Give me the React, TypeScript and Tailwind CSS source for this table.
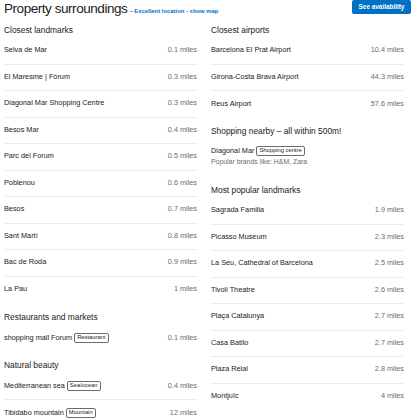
import React from "react";

interface Place {
	name: string;
	distance: string;
	tag?: string;
}

interface Section {
	title: string;
	places: Place[];
}

const leftSections: Section[] = [
	{
		title: "Closest landmarks",
		places: [
			{ name: "Selva de Mar", distance: "0.1 miles" },
			{ name: "El Maresme | Fòrum", distance: "0.3 miles" },
			{ name: "Diagonal Mar Shopping Centre", distance: "0.3 miles" },
			{ name: "Besos Mar", distance: "0.4 miles" },
			{ name: "Parc del Forum", distance: "0.5 miles" },
			{ name: "Poblenou", distance: "0.6 miles" },
			{ name: "Besos", distance: "0.7 miles" },
			{ name: "Sant Martí", distance: "0.8 miles" },
			{ name: "Bac de Roda", distance: "0.9 miles" },
			{ name: "La Pau", distance: "1 miles" },
		],
	},
	{
		title: "Restaurants and markets",
		places: [
			{ name: "shopping mall Forum", tag: "Restaurant", distance: "0.1 miles" },
		],
	},
	{
		title: "Natural beauty",
		places: [
			{ name: "Mediterranean sea", tag: "Sea/ocean", distance: "0.4 miles" },
			{ name: "Tibidabo mountain", tag: "Mountain", distance: "12 miles" },
		],
	},
];

const airports: Place[] = [
	{ name: "Barcelona El Prat Airport", distance: "10.4 miles" },
	{ name: "Girona-Costa Brava Airport", distance: "44.3 miles" },
	{ name: "Reus Airport", distance: "57.6 miles" },
];

const popular: Place[] = [
	{ name: "Sagrada Familia", distance: "1.9 miles" },
	{ name: "Picasso Museum", distance: "2.3 miles" },
	{ name: "La Seu, Cathedral of Barcelona", distance: "2.5 miles" },
	{ name: "Tivoli Theatre", distance: "2.6 miles" },
	{ name: "Plaça Catalunya", distance: "2.7 miles" },
	{ name: "Casa Batllo", distance: "2.7 miles" },
	{ name: "Plaza Reial", distance: "2.8 miles" },
	{ name: "Montjuïc", distance: "4 miles" },
];

function Tag({ label }: { label: string }) {
	return (
		<span className="ml-[2px] inline-flex h-[10px] items-center rounded-[2px] border border-[#6b6b6b] px-[2px] text-[5.8px] leading-none text-[#1a1a1a]">
			{label}
		</span>
	);
}

function Heading({ children }: { children: React.ReactNode }) {
	return (
		<div className="flex h-4 items-center text-[8.4px] font-medium text-[#1a1a1a]">
			{children}
		</div>
	);
}

function PlaceList({ places }: { places: Place[] }) {
	return (
		<ul>
			{places.map((p) => (
				<li
					key={p.name}
					className="flex h-[26.5px] items-center justify-between border-b border-[#ececec] text-[7.3px] last:border-b-0"
				>
					<span className="flex items-center text-[#1a1a1a]">
						{p.name}
						{p.tag && <Tag label={p.tag} />}
					</span>
					<span className="text-[#6b6b6b]">{p.distance}</span>
				</li>
			))}
		</ul>
	);
}

export default function App() {
	return (
		<div
			className="h-[420px] w-[420px] overflow-hidden bg-white pl-[4px]"
			style={{ fontFamily: '"Liberation Sans", Arial, sans-serif' }}
		>
			<div className="flex h-[22px] items-start justify-between pr-[9px]">
				<div className="flex items-baseline">
					<h1 className="text-[13.5px] font-medium leading-[17px] tracking-[-0.45px] text-[#1a1a1a]">
						Property surroundings
					</h1>
					<span className="ml-[2px] text-[5.9px] font-bold text-[#0071c2]">
						– Excellent location - show map
					</span>
				</div>
				<button className="flex h-[14px] w-[59px] items-center justify-center rounded-[2px] bg-[#0071c2] text-[6.4px] font-bold text-white">
					See availability
				</button>
			</div>

			<div className="grid grid-cols-[193px_193px] gap-x-[14px]">
				<div className="flex flex-col gap-[6px]">
					{leftSections.map((s) => (
						<section key={s.title}>
							<Heading>{s.title}</Heading>
							<PlaceList places={s.places} />
						</section>
					))}
				</div>

				<div className="flex flex-col gap-[6px]">
					<section>
						<Heading>Closest airports</Heading>
						<PlaceList places={airports} />
					</section>
					<section>
						<Heading>Shopping nearby – all within 500m!</Heading>
						<div className="pb-[8.5px] pt-[6px]">
							<div className="flex h-[11px] items-center text-[7.3px] text-[#1a1a1a]">
								Diagonal Mar
								<Tag label="Shopping centre" />
							</div>
							<div className="flex h-[11px] items-center text-[6.9px] text-[#6b6b6b]">
								Popular brands like: H&amp;M, Zara
							</div>
						</div>
					</section>
					<section>
						<Heading>Most popular landmarks</Heading>
						<PlaceList places={popular} />
					</section>
				</div>
			</div>
		</div>
	);
}
